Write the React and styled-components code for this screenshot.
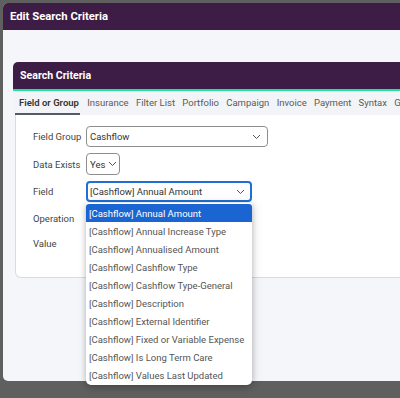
import React from "react";
import styled, { createGlobalStyle } from "styled-components";

const Global = createGlobalStyle`
  html, body { margin: 0; padding: 0; }
  body {
    width: 400px; height: 398px; overflow: hidden;
    background: #5f5f5f;
    font-family: Roboto, "Noto Sans", sans-serif;
  }
`;

const Dialog = styled.div`
  position: relative;
  margin: 3px 0 0 3px;
  width: 440px;
  height: 378px;
  background: #f5f6fa;
  border-radius: 5px 0 0 5px;
  display: flex;
  flex-direction: column;
`;

const TitleBar = styled.div`
  height: 27px;
  background: #3d1c45;
  border-radius: 5px 0 0 0;
  color: #fff;
  font-weight: 700;
  font-size: 11.3px;
  display: flex;
  align-items: center;
  padding-left: 7px;
`;

const Body = styled.div`
  padding: 32px 0 0 10px;
`;

const Panel = styled.div`
  display: flex;
  flex-direction: column;
`;

const PanelHeader = styled.div`
  height: 27px;
  background: #3d1c45;
  border-radius: 5px 0 0 0;
  border-bottom: 2px solid #1ee39b;
  color: #fff;
  font-weight: 700;
  font-size: 10.6px;
  display: flex;
  align-items: center;
  padding-left: 7px;
`;

const Tabs = styled.div`
  display: flex;
  gap: 7.3px;
  padding: 0 0 0 6px;
  background: #f3f4f8;
  height: 24px;
  align-items: stretch;
  white-space: nowrap;
`;

const Tab = styled.div`
  font-size: 9.5px;
  color: ${(p) => (p.$active ? "#333" : "#5a5a5a")};
  font-weight: ${(p) => (p.$active ? 600 : 400)};
  display: flex;
  align-items: center;
  border-bottom: 2px solid ${(p) => (p.$active ? "#555a66" : "transparent")};
  margin-left: ${(p) => (p.$active ? "-4px" : "0")};
  padding: 0 ${(p) => (p.$active ? "1px" : "0")} 0 ${(p) => (p.$active ? "4px" : "0")};
`;

const Content = styled.div`
  margin-left: 2px;
  background: #fff;
  border: 1px solid #d8dbe0;
  border-top: none;
  border-radius: 0 0 0 6px;
  height: 151px;
  padding: 11px 0 0 17px;
  display: grid;
  grid-template-columns: 53px auto;
  grid-auto-rows: min-content;
  row-gap: 6px;
  align-items: center;
`;

const Label = styled.div`
  font-size: 9.5px;
  color: #444;
  height: ${(p) => p.$h || 21}px;
  display: flex;
  align-items: center;
  white-space: nowrap;
`;

const SelectBox = styled.div`
  position: relative;
  box-sizing: border-box;
  width: ${(p) => p.$w}px;
  height: ${(p) => p.$h || 21}px;
  border: ${(p) => (p.$focus ? "2px solid #1f70d6" : "1px solid #8e8e8e")};
  border-radius: 4px;
  font-size: 9.5px;
  color: #333;
  display: flex;
  align-items: center;
  justify-content: space-between;
  padding: 0 ${(p) => (p.$focus ? 5 : 6)}px 0 ${(p) => (p.$focus ? 2 : 3)}px;
  background: #fff;
  white-space: nowrap;
`;

const Chevron = styled.svg`
  margin-left: 3px;
  flex: none;
`;

const ChevronIcon = () => (
  <Chevron width="9" height="6" viewBox="0 0 9 6">
    <path d="M1 1 L4.5 4.5 L8 1" fill="none" stroke="#555" strokeWidth="1" />
  </Chevron>
);

const Empty = styled.div`
  height: ${(p) => p.$h}px;
`;

const Menu = styled.div`
  position: absolute;
  top: 20px;
  left: -2px;
  width: 166px;
  background: #fff;
  border-radius: 0 0 5px 5px;
  box-shadow: 0 2px 6px rgba(0,0,0,0.25), 2px 0 12px rgba(0,0,0,0.08);
  z-index: 10;
  padding-top: 1px;
`;

const Option = styled.div`
  height: 18.1px;
  display: flex;
  align-items: center;
  padding-left: 3px;
  font-size: 9.5px;
  color: ${(p) => (p.$sel ? "#fff" : "#555")};
  background: ${(p) => (p.$sel ? "#1a65d1" : "transparent")};
  border-radius: ${(p) => (p.$sel ? "3px 3px 0 0" : "0")};
  white-space: nowrap;
`;

const options = [
  "Annual Amount",
  "Annual Increase Type",
  "Annualised Amount",
  "Cashflow Type",
  "Cashflow Type-General",
  "Description",
  "External Identifier",
  "Fixed or Variable Expense",
  "Is Long Term Care",
  "Values Last Updated",
];

const tabs = ["Field or Group", "Insurance", "Filter List", "Portfolio", "Campaign", "Invoice", "Payment", "Syntax", "Groups"];

export default function App() {
  return (
    <>
      <Global />
      <Dialog>
        <TitleBar>Edit Search Criteria</TitleBar>
        <Body>
          <Panel>
            <PanelHeader>Search Criteria</PanelHeader>
            <Tabs>
              {tabs.map((t, i) => (
                <Tab key={t} $active={i === 0}>{t}</Tab>
              ))}
            </Tabs>
            <Content>
              <Label>Field Group</Label>
              <SelectBox $w={182}>Cashflow<ChevronIcon /></SelectBox>
              <Label>Data Exists</Label>
              <SelectBox $w={34} $h={22}>Yes<ChevronIcon /></SelectBox>
              <Label>Field</Label>
              <SelectBox $w={166} $focus>
                [Cashflow] Annual Amount<ChevronIcon />
                <Menu>
                  {options.map((o, i) => (
                    <Option key={o} $sel={i === 0}>[Cashflow] {o}</Option>
                  ))}
                </Menu>
              </SelectBox>
              <Label>Operation</Label>
              <Empty $h={21} />
              <Label $h={16}>Value</Label>
              <Empty $h={16} />
            </Content>
          </Panel>
        </Body>
      </Dialog>
    </>
  );
}
